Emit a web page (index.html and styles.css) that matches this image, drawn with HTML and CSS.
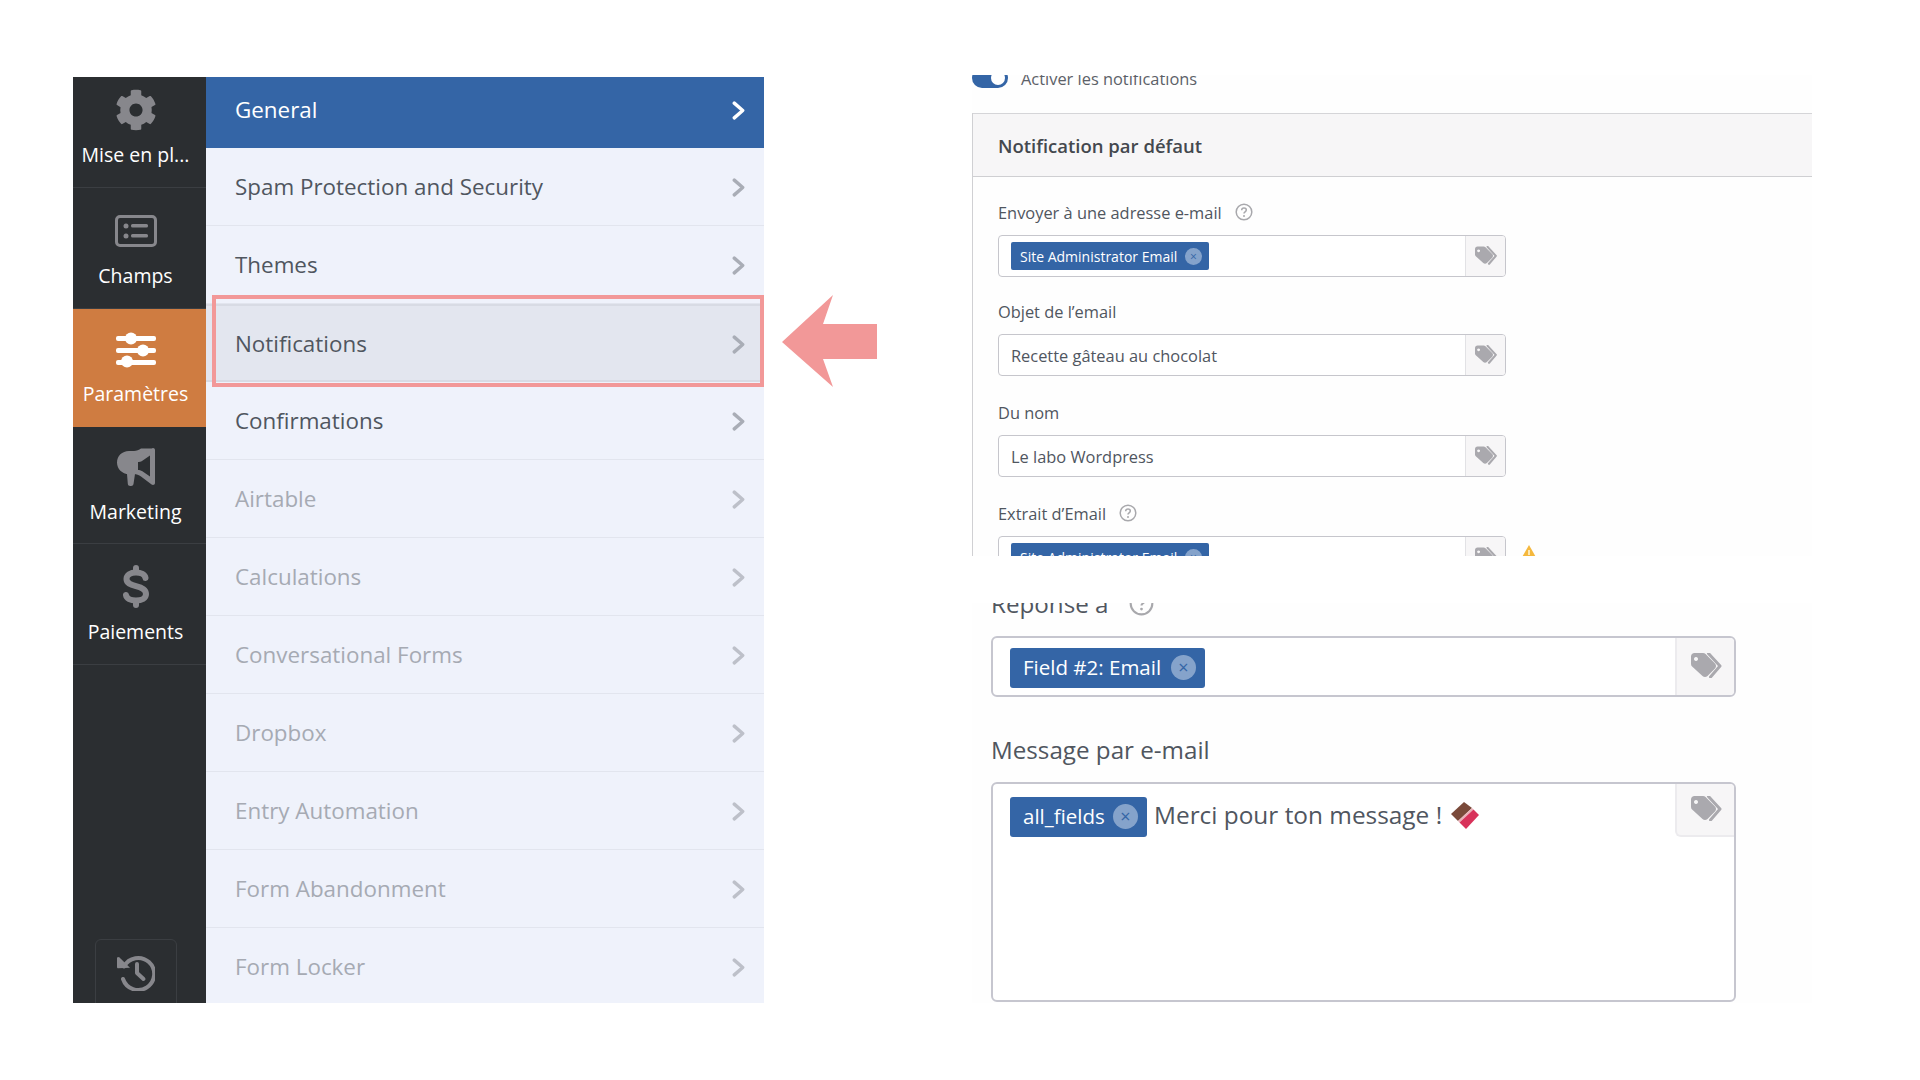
FILE: index.html
```html
<!DOCTYPE html>
<html lang="fr">
<head>
  <meta charset="UTF-8">
  <title>Notifications</title>
  <link rel="stylesheet" href="styles.css">
</head>
<body>
  <svg class="defs" width="0" height="0">
    <symbol id="tags" viewBox="0 0 32 25">
      <path d="M0 3.500C0 1.500 1.500 0 3.500 0H12c1 0 1.900.4 2.600 1.100L24 10.500c1.400 1.400 1.400 3.600 0 5l-7.500 7.500c-1.400 1.400-3.600 1.400-5 0L1.100 13.600C.4 12.900 0 12 0 11zM5 4a2 2 0 1 0 .01 0z" fill-rule="evenodd"/>
      <path d="M17.500 0.500l11.500 12.500-9.500 11" fill="none" stroke="currentColor" stroke-width="3" stroke-linecap="round" stroke-linejoin="round"/>
    </symbol>
    <symbol id="chev" viewBox="0 0 12 18">
      <path d="M2 2l8 7-8 7" fill="none" stroke="currentColor" stroke-width="3.200" stroke-linecap="round" stroke-linejoin="round"/>
    </symbol>
    <symbol id="help" viewBox="0 0 18 18">
      <circle cx="9" cy="9" r="7.800" fill="none" stroke="currentColor" stroke-width="1.500"/>
      <path d="M6.700 7.200c0-1.400 1-2.200 2.300-2.200s2.300.8 2.300 2c0 1.800-2.300 1.800-2.300 3.500" fill="none" stroke="currentColor" stroke-width="1.500"/>
      <circle cx="9" cy="13" r="1" fill="currentColor"/>
    </symbol>
  </svg>

  <div class="page">
    <div class="builder">
      <nav class="sidebar">
        <a class="side-item side-item--setup">
          <svg class="side-icon" width="42" height="42" viewBox="0 0 512 512"><path d="M487.400 315.700l-42.600-24.600c4.300-23.200 4.300-47 0-70.200l42.600-24.600c4.900-2.800 7.100-8.600 5.500-14-11.100-35.600-30-67.800-54.700-94.600-3.800-4.100-10-5.100-14.800-2.300L380.800 110c-17.900-15.400-38.500-27.300-60.800-35.100V25.800c0-5.600-3.900-10.500-9.400-11.700-36.700-8.200-74.300-7.800-109.200 0-5.500 1.200-9.400 6.100-9.400 11.700V75c-22.200 7.900-42.800 19.800-60.800 35.100L88.700 85.500c-4.900-2.800-11-1.900-14.800 2.300-24.700 26.700-43.600 58.900-54.700 94.600-1.700 5.400.6 11.200 5.500 14L67.300 221c-4.300 23.200-4.300 47 0 70.200l-42.600 24.600c-4.900 2.800-7.100 8.600-5.500 14 11.100 35.600 30 67.800 54.700 94.600 3.800 4.100 10 5.100 14.800 2.300l42.600-24.600c17.900 15.400 38.500 27.300 60.800 35.100v49.200c0 5.600 3.900 10.500 9.400 11.700 36.700 8.200 74.300 7.800 109.200 0 5.500-1.200 9.400-6.100 9.400-11.700v-49.200c22.200-7.900 42.800-19.800 60.800-35.100l42.600 24.600c4.900 2.800 11 1.900 14.800-2.300 24.700-26.700 43.600-58.900 54.700-94.600 1.500-5.500-.7-11.300-5.600-14.100zM256 336c-44.100 0-80-35.900-80-80s35.900-80 80-80 80 35.900 80 80-35.900 80-80 80z"/></svg>
          <span>Mise en pl...</span>
        </a>
        <a class="side-item side-item--fields">
          <svg class="side-icon" width="42" height="32" viewBox="0 0 42 32">
            <rect x="1.500" y="1.500" width="39" height="29" rx="3.500" fill="none" stroke="currentColor" stroke-width="3"/>
            <circle cx="11" cy="11" r="2.500"/><circle cx="11" cy="21" r="2.500"/>
            <rect x="16" y="9" width="17" height="3.500" rx="1.500"/><rect x="16" y="19" width="17" height="3.500" rx="1.500"/>
          </svg>
          <span>Champs</span>
        </a>
        <a class="side-item side-item--settings">
          <svg class="side-icon side-icon--on" width="42" height="36" viewBox="0 0 42 36">
            <rect x="1" y="4" width="40" height="5" rx="2"/><rect x="1" y="16" width="40" height="5" rx="2"/><rect x="1" y="28" width="40" height="5" rx="2"/>
            <circle cx="16" cy="6.500" r="6"/><circle cx="28" cy="18.500" r="6"/><circle cx="12" cy="29.500" r="6"/>
          </svg>
          <span>Paramètres</span>
        </a>
        <a class="side-item side-item--marketing">
          <svg class="side-icon" width="38" height="38" viewBox="0 0 38 38">
            <path d="M36 0c1.100 0 2 .9 2 2v33c0 1.100-.9 2-2 2-.5 0-1-.2-1.400-.5L24 28.500c-2-1.500-4.500-2.300-7-2.400l-5 .1C5 26 0 21 0 14.500S5 3 12 3h5c2.500 0 5-.9 7-2.400L34.600.5C35 .2 35.500 0 36 0zM33 7.500L25 13c-1 .7-2.800 1-4 1v8c1.200.1 3 .4 4 1.100l8 5.400z" fill-rule="evenodd"/>
            <path d="M10 26h8l-1.500 10c-.2 1.200-1.200 2-2.300 2h-1c-1.300 0-2.300-1-2.400-2.300z"/>
          </svg>
          <span>Marketing</span>
        </a>
        <a class="side-item side-item--payments">
          <svg class="side-icon" width="26" height="43" viewBox="0 0 26 43">
            <path d="M22.500 13C22 9.500 18 7.500 13 7.500 7.500 7.500 3.500 10 3.500 14c0 4 3.500 5.500 9.500 7.200 6.500 1.700 10 3.500 10 7.800 0 4.500-4.500 6.500-10 6.500S3.500 33.500 3 30" fill="none" stroke="currentColor" stroke-width="6" stroke-linecap="round"/>
            <rect x="10" y="0" width="6" height="9" rx="3"/><rect x="10" y="34" width="6" height="9" rx="3"/>
          </svg>
          <span>Paiements</span>
        </a>
        <a class="history-btn">
          <svg class="side-icon" width="38" height="36" viewBox="0 0 38 36">
            <path d="M7 11.500A16 16 0 1 1 6 24" fill="none" stroke="currentColor" stroke-width="4" stroke-linecap="round"/>
            <path d="M0 2.500l2-.5 11 10.800-11.800.5C.4 13.300 0 12.800 0 12z"/>
            <path d="M20 9v9l6.500 6" fill="none" stroke="currentColor" stroke-width="4" stroke-linecap="round" stroke-linejoin="round"/>
          </svg>
        </a>
      </nav>

      <ul class="menu">
        <li class="menu-item menu-item--active">General<svg class="chev"><use href="#chev"/></svg></li>
        <li class="menu-item">Spam Protection and Security<svg class="chev"><use href="#chev"/></svg></li>
        <li class="menu-item">Themes<svg class="chev"><use href="#chev"/></svg></li>
        <li class="menu-item menu-item--hover">Notifications<svg class="chev"><use href="#chev"/></svg></li>
        <li class="menu-item">Confirmations<svg class="chev"><use href="#chev"/></svg></li>
        <li class="menu-item menu-item--off">Airtable<svg class="chev"><use href="#chev"/></svg></li>
        <li class="menu-item menu-item--off">Calculations<svg class="chev"><use href="#chev"/></svg></li>
        <li class="menu-item menu-item--off">Conversational Forms<svg class="chev"><use href="#chev"/></svg></li>
        <li class="menu-item menu-item--off">Dropbox<svg class="chev"><use href="#chev"/></svg></li>
        <li class="menu-item menu-item--off">Entry Automation<svg class="chev"><use href="#chev"/></svg></li>
        <li class="menu-item menu-item--off">Form Abandonment<svg class="chev"><use href="#chev"/></svg></li>
        <li class="menu-item menu-item--off">Form Locker<svg class="chev"><use href="#chev"/></svg></li>
      </ul>

      <div class="highlight"></div>
      <svg class="arrow" width="95" height="92" viewBox="0 0 95 92"><path d="M0 47L51 0 41 29H95V64H41L51 92z"/></svg>
    </div>

    <div class="shots">
      <section class="shot shot--top">
        <div class="toggle-row">
          <span class="toggle"></span>
          <span class="toggle-text">Activer les notifications</span>
        </div>
        <div class="panel">
          <div class="panel-head">Notification par défaut</div>
          <div class="panel-body">
            <label class="lbl">Envoyer à une adresse e-mail <svg class="help"><use href="#help"/></svg></label>
            <div class="row row--first">
              <div class="field">
                <div class="field-main"><span class="chip">Site Administrator Email<i class="chip-x">×</i></span></div>
                <div class="field-tag"><svg class="tag-icon"><use href="#tags"/></svg></div>
              </div>
            </div>
            <label class="lbl">Objet de l’email</label>
            <div class="row">
              <div class="field">
                <div class="field-main">Recette gâteau au chocolat</div>
                <div class="field-tag"><svg class="tag-icon"><use href="#tags"/></svg></div>
              </div>
            </div>
            <label class="lbl">Du nom</label>
            <div class="row">
              <div class="field">
                <div class="field-main">Le labo Wordpress</div>
                <div class="field-tag"><svg class="tag-icon"><use href="#tags"/></svg></div>
              </div>
            </div>
            <label class="lbl">Extrait d’Email <svg class="help"><use href="#help"/></svg></label>
            <div class="row">
              <div class="field">
                <div class="field-main"><span class="chip">Site Administrator Email<i class="chip-x">×</i></span></div>
                <div class="field-tag"><svg class="tag-icon"><use href="#tags"/></svg></div>
              </div>
              <svg class="warn" width="16" height="14" viewBox="0 0 16 14"><path d="M8 0l8 14H0z"/><rect x="7.200" y="5" width="1.600" height="5" fill="#fff3d0"/></svg>
            </div>
          </div>
        </div>
      </section>

      <section class="shot shot--bottom">
        <label class="big-lbl big-lbl--cut">Réponse à <svg class="big-help"><use href="#help"/></svg></label>
        <div class="big-field">
          <div class="big-main"><span class="big-chip">Field #2: Email<i class="big-x">×</i></span></div>
          <div class="big-tag"><svg class="big-tag-icon"><use href="#tags"/></svg></div>
        </div>
        <label class="big-lbl">Message par e-mail</label>
        <div class="big-field big-field--area">
          <div class="big-main big-main--area">
            <span class="big-chip big-chip--short">all_fields<i class="big-x">×</i></span>
            <span class="msg">Merci pour ton message !</span>
            <svg class="choc" width="28" height="27" viewBox="0 0 28 27">
              <path d="M13 0L0 12l7 7L21 6z" fill="#7a4a3a"/>
              <path d="M7 19l14-13 1.500 1.500-14 13z" fill="#eab0b8"/>
              <path d="M8.500 20.500l14-13L28 13 15 27z" fill="#d8325a"/>
            </svg>
          </div>
          <div class="big-tag big-tag--corner"><svg class="big-tag-icon"><use href="#tags"/></svg></div>
        </div>
      </section>
    </div>
  </div>
</body>
</html>
```

FILE: styles.css
```css
* {
  box-sizing: border-box;
}
body {
  margin: 0;
  background-color: #ffffff;
  font-family: "Open Sans", "Noto Sans", sans-serif;
  color: #50565f;
}
.defs {
  display: block;
  height: 0;
}
.page {
  display: flex;
  width: 1920px;
  height: 1080px;
  overflow: hidden;
  padding-left: 73px;
}

/* left: form builder */
.builder {
  position: relative;
  display: flex;
  width: 691px;
  height: 926px;
  margin-top: 77px;
}
.sidebar {
  display: flex;
  flex-direction: column;
  width: 133px;
  height: 926px;
  overflow: hidden;
  background-color: #2b2e31;
}
.side-item {
  display: flex;
  flex-direction: column;
  align-items: center;
  padding-right: 8px;
  color: #ffffff;
  font-size: 19.500px;
  line-height: 26px;
  white-space: nowrap;
  border-bottom: 1px solid #3b3e42;
}
.side-icon {
  display: block;
  color: #87878c;
  fill: currentColor;
}
.side-item--setup {
  height: 111px;
  padding-top: 12px;
  gap: 11px;
}
.side-item--fields {
  height: 121px;
  padding-top: 27px;
  gap: 16px;
}
.side-item--settings {
  height: 118px;
  padding-top: 23px;
  gap: 13px;
  background-color: #cf7c41;
  border-bottom: none;
}
.side-icon--on {
  color: #ffffff;
}
.side-item--marketing {
  height: 117px;
  padding-top: 21px;
  gap: 13px;
}
.side-item--payments {
  height: 121px;
  padding-top: 21px;
  gap: 11px;
}
.history-btn {
  display: flex;
  justify-content: center;
  width: 82px;
  height: 90px;
  margin: auto 0 -26px 22px;
  padding-top: 15px;
  border: 1px solid #3b3e42;
  border-radius: 6px;
}
.menu {
  width: 558px;
  height: 926px;
  margin: 0;
  padding: 0;
  overflow: hidden;
  list-style: none;
  background-color: #eff2fb;
}
.menu-item {
  display: flex;
  align-items: center;
  justify-content: space-between;
  height: 78px;
  padding: 0 19px 0 29px;
  font-size: 22.400px;
  color: #50565f;
  border-bottom: 1px solid #e2e5ee;
}
.menu-item--active {
  height: 71px;
  padding-bottom: 6px;
  color: #ffffff;
  background-color: #3465a6;
  border-bottom: none;
}
.menu-item--hover {
  background-color: #e3e6ef;
  border-top: 2px solid #d8dbe4;
  border-bottom: 2px solid #d8dbe4;
}
.menu-item--off {
  color: #a6aab3;
}
.chev {
  width: 13px;
  height: 19px;
  margin-top: 2px;
  color: #a9adb6;
}
.menu-item--off .chev {
  color: #bdc0c9;
}
.menu-item--active .chev {
  color: #ffffff;
}
.highlight {
  position: absolute;
  left: 139px;
  top: 218px;
  width: 552px;
  height: 92px;
  border: 4px solid #f29898;
}
.arrow {
  position: absolute;
  left: 709px;
  top: 218px;
  fill: #f29898;
}

/* right: the two cropped screenshots */
.shots {
  display: flex;
  flex-direction: column;
  width: 840px;
  margin-left: 208px;
  padding-top: 75px;
}
.shot {
  overflow: hidden;
  background-color: #fefefe;
}
.shot--top {
  height: 481px;
}
.shot--bottom {
  height: 400px;
  margin-top: 47px;
  padding-left: 19px;
}
.toggle-row {
  display: flex;
  align-items: center;
  gap: 13px;
  height: 20px;
  margin-top: -7px;
  font-size: 16.400px;
  color: #5c6168;
}
.toggle {
  width: 36px;
  height: 20px;
  border-radius: 10px;
  background-color: #3465a6;
  position: relative;
}
.toggle::after {
  content: "";
  position: absolute;
  right: 3px;
  top: 3px;
  width: 14px;
  height: 14px;
  border-radius: 50%;
  background-color: #ffffff;
}
.panel {
  margin-top: 25px;
  border-left: 1px solid #d0d0d3;
}
.panel-head {
  display: flex;
  align-items: center;
  height: 64px;
  padding-left: 25px;
  font-size: 18.500px;
  font-weight: 600;
  color: #44484e;
  background-color: #f7f6f7;
  border-top: 1px solid #d5d5d8;
  border-bottom: 1px solid #cfcfd2;
}
.panel-body {
  padding: 24px 0 0 25px;
}
.lbl {
  display: flex;
  align-items: center;
  gap: 7px;
  height: 24px;
  margin-bottom: 10px;
  padding-bottom: 2px;
  font-size: 16.400px;
  color: #50565f;
}
.help {
  width: 18px;
  height: 18px;
  margin-left: 6px;
  color: #a8a8ac;
}
.row {
  display: flex;
  gap: 15px;
  margin-bottom: 25px;
}
.row--first {
  margin-bottom: 23px;
}
.field {
  display: flex;
  width: 508px;
  height: 42px;
  border: 1px solid #c6c6cc;
  border-radius: 4px;
  background-color: #ffffff;
  overflow: hidden;
}
.field-main {
  display: flex;
  flex: 1;
  align-items: center;
  padding-left: 12px;
  font-size: 16.400px;
  color: #50565f;
}
.field-tag {
  display: flex;
  align-items: center;
  justify-content: center;
  width: 40px;
  padding: 0 0 2px 2px;
  background-color: #f7f6f7;
  border-left: 1px solid #e2e2e5;
}
.tag-icon {
  width: 23px;
  height: 19px;
  color: #aaa9ae;
  fill: currentColor;
}
.chip {
  display: flex;
  align-items: center;
  justify-content: space-between;
  width: 198px;
  height: 28px;
  padding: 0 7px 0 9px;
  font-size: 14px;
  color: #ffffff;
  background-color: #3465a6;
  border-radius: 2px;
}
.chip-x {
  display: flex;
  align-items: center;
  justify-content: center;
  width: 17px;
  height: 17px;
  font-size: 12px;
  font-style: normal;
  color: #3465a6;
  background-color: #85a3cb;
  border-radius: 50%;
}
.warn {
  flex-shrink: 0;
  margin-top: 9px;
  fill: #f5b83d;
}
.big-lbl {
  display: flex;
  align-items: center;
  gap: 6px;
  height: 34px;
  margin-bottom: 15px;
  padding-bottom: 2px;
  font-size: 24.200px;
  color: #50565f;
}
.big-lbl--cut {
  margin-top: -16px;
}
.big-help {
  width: 25px;
  height: 25px;
  margin-left: 14px;
  color: #a8a8ac;
}
.big-field {
  display: flex;
  width: 745px;
  height: 61px;
  margin-bottom: 36px;
  border: 2px solid #c6c6cf;
  border-radius: 6px;
  background-color: #ffffff;
  overflow: hidden;
}
.big-field--area {
  height: 220px;
  margin-bottom: 0;
}
.big-main {
  display: flex;
  flex: 1;
  align-self: flex-start;
  align-items: center;
  gap: 7px;
  padding: 10px 0 0 17px;
}
.big-main--area {
  padding-top: 13px;
}
.big-chip {
  display: flex;
  align-items: center;
  justify-content: space-between;
  width: 195px;
  height: 40px;
  padding: 0 9px 2px 13px;
  font-size: 20.500px;
  color: #ffffff;
  background-color: #3465a6;
  border-radius: 3px;
}
.big-chip--short {
  width: 137px;
}
.big-x {
  display: flex;
  align-items: center;
  justify-content: center;
  width: 25px;
  height: 25px;
  font-size: 18px;
  font-style: normal;
  color: #3465a6;
  background-color: #85a3cb;
  border-radius: 50%;
}
.msg {
  margin-bottom: 5px;
  font-size: 24.400px;
  color: #50565f;
}
.choc {
  margin: 0 0 3px 2px;
}
.big-tag {
  display: flex;
  align-items: center;
  justify-content: center;
  align-self: stretch;
  width: 59px;
  padding: 0 0 2px 3px;
  background-color: #f7f6f7;
  border-left: 2px solid #ecebee;
}
.big-tag--corner {
  align-self: flex-start;
  height: 53px;
  border-bottom: 2px solid #ecebee;
  border-bottom-left-radius: 6px;
}
.big-tag-icon {
  width: 32px;
  height: 25px;
  color: #aaa9ae;
  fill: currentColor;
}
```
